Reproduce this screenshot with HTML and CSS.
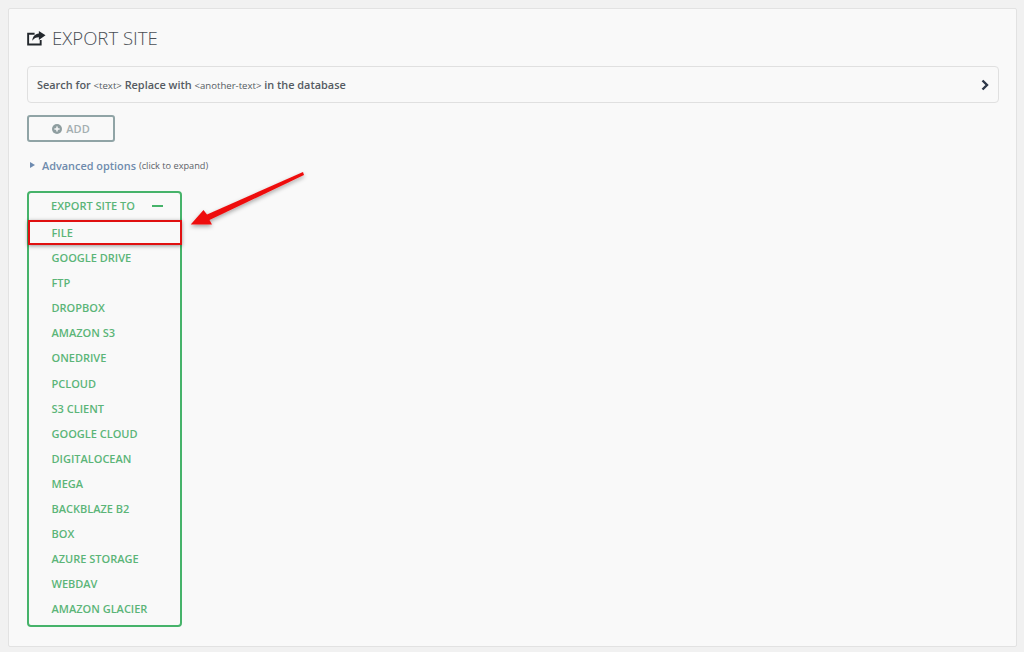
FILE: index.html
```html
<!DOCTYPE html>
<html>
<head>
  <meta charset="UTF-8">
  <meta name="viewport" content="width=device-width, initial-scale=1.0">
  <title>Export site</title>
  <link rel="stylesheet" href="styles.css">
</head>
<body>
  <main class="panel">
    <h1 class="title">
      <svg class="title-icon" viewBox="0 0 20 16" aria-hidden="true">
        <path d="M8 3.5H1.2v11.3h13.2V10" fill="none" stroke="#23282d" stroke-width="2"/>
        <path d="M12.5 0.5 L19.5 5.2 L12.5 10 V7.2 C9.5 7.2 7.3 8.3 5.6 11 C5.8 6.8 8.3 3.6 12.5 3.3 Z" fill="#23282d"/>
      </svg>
      EXPORT SITE
    </h1>

    <section class="search-replace">
      <span>Search for <small>&lt;text&gt;</small> Replace with <small>&lt;another-text&gt;</small> in the database</span>
      <svg class="chevron" viewBox="0 0 8 12" aria-hidden="true">
        <path d="M1.5 1.5 L6 6 L1.5 10.5" fill="none" stroke="#2d3748" stroke-width="2.4"/>
      </svg>
    </section>

    <button class="btn-add">
      <svg class="plus" viewBox="0 0 10 10" aria-hidden="true">
        <circle cx="5" cy="5" r="5" fill="#8f9ea0"/>
        <path d="M5 2.4v5.2M2.4 5h5.2" stroke="#f8f8f8" stroke-width="1.5"/>
      </svg>
      ADD
    </button>

    <p class="advanced">
      <span class="caret"></span>
      <a class="advanced-link">Advanced options</a>
      <small>(click to expand)</small>
    </p>

    <section class="export-menu">
      <div class="export-head">EXPORT SITE TO <span class="minus"></span></div>
      <ul class="export-list">
        <li class="first">FILE</li>
        <li>GOOGLE DRIVE</li>
        <li>FTP</li>
        <li>DROPBOX</li>
        <li>AMAZON S3</li>
        <li>ONEDRIVE</li>
        <li>PCLOUD</li>
        <li>S3 CLIENT</li>
        <li>GOOGLE CLOUD</li>
        <li>DIGITALOCEAN</li>
        <li>MEGA</li>
        <li>BACKBLAZE B2</li>
        <li>BOX</li>
        <li>AZURE STORAGE</li>
        <li>WEBDAV</li>
        <li>AMAZON GLACIER</li>
      </ul>
    </section>
  </main>

  <div class="highlight"></div>
  <svg class="arrow" viewBox="0 0 1024 652" aria-hidden="true">
    <defs>
      <filter id="soft" x="-20%" y="-20%" width="140%" height="140%">
        <feDropShadow dx="0" dy="2" stdDeviation="2" flood-color="#000" flood-opacity="0.35"/>
      </filter>
    </defs>
    <path d="M303 172 L207 214.500 L203.500 210 L190.700 224.500 L212 224.500 L209.500 220 L304 175 Z" fill="#ee1111" filter="url(#soft)"/>
  </svg>
</body>
</html>
```

FILE: styles.css
```css
* {
  box-sizing: border-box;
}

body {
  position: relative;
  width: 1024px;
  height: 652px;
  margin: 0;
  padding: 8px 7px 5px 8px;
  overflow: hidden;
  background-color: #f1f1f1;
  font-family: 'Open Sans', sans-serif;
  color: #50575e;
}

.panel {
  height: 639px;
  padding: 19px 17px 0 18px;
  background-color: #f9f9f9;
  border: 1px solid #e2e2e2;
  border-radius: 2px;
}

.title {
  display: flex;
  align-items: center;
  gap: 6px;
  height: 20px;
  margin: 0 0 18px 0;
  font-size: 18.6px;
  font-weight: 300;
  line-height: 20px;
  color: #4a4f55;
}

.title-icon {
  width: 19px;
  height: 16px;
}

.search-replace {
  display: flex;
  align-items: center;
  justify-content: space-between;
  height: 37px;
  padding: 0 9px 0 9px;
  border: 1px solid #e0e0e0;
  border-radius: 4px;
  font-size: 10.9px;
  font-weight: 600;
  color: #555b62;
}

.search-replace small {
  font-size: 9.6px;
  font-weight: 400;
}

.chevron {
  width: 8px;
  height: 12px;
}

.btn-add {
  display: flex;
  align-items: center;
  justify-content: center;
  gap: 4px;
  width: 88px;
  height: 27px;
  margin-top: 12px;
  padding: 0;
  background: none;
  border: 2px solid #90a4a6;
  border-radius: 3px;
  font-family: inherit;
  font-size: 11px;
  font-weight: 600;
  color: #a3aeb0;
}

.plus {
  width: 10px;
  height: 10px;
}

.advanced {
  display: flex;
  align-items: center;
  height: 16px;
  margin: 15px 0 0 0;
  font-size: 10.9px;
}

.caret {
  width: 0;
  height: 0;
  margin: 0 7px 0 3px;
  border-left: 5px solid #6e8bb0;
  border-top: 3px solid transparent;
  border-bottom: 3px solid transparent;
}

.advanced-link {
  font-weight: 600;
  color: #6f8bad;
}

.advanced small {
  margin-left: 3px;
  font-size: 9.2px;
  color: #5c6268;
}

.export-menu {
  width: 155px;
  height: 436px;
  margin-top: 18px;
  border: 2px solid #46b36a;
  border-radius: 4px;
  color: #5bb578;
  font-size: 11px;
  font-weight: 600;
}

.export-head {
  display: flex;
  align-items: center;
  justify-content: space-between;
  height: 26px;
  padding: 0 17px 1px 22px;
}

.minus {
  width: 11px;
  height: 2px;
  background-color: #46b36a;
}

.export-list {
  margin: 0;
  padding: 0;
  list-style: none;
}

.export-list li {
  height: 25.1px;
  padding-left: 22.5px;
  line-height: 25px;
}

.export-list .first {
  margin-top: 1px;
}

.highlight {
  position: absolute;
  top: 220px;
  left: 28px;
  width: 154px;
  height: 24.5px;
  border: 2px solid #e01010;
  box-shadow: 0 1px 4px rgba(0, 0, 0, 0.4);
}

.arrow {
  position: absolute;
  top: 0;
  left: 0;
  width: 1024px;
  height: 652px;
}
```
